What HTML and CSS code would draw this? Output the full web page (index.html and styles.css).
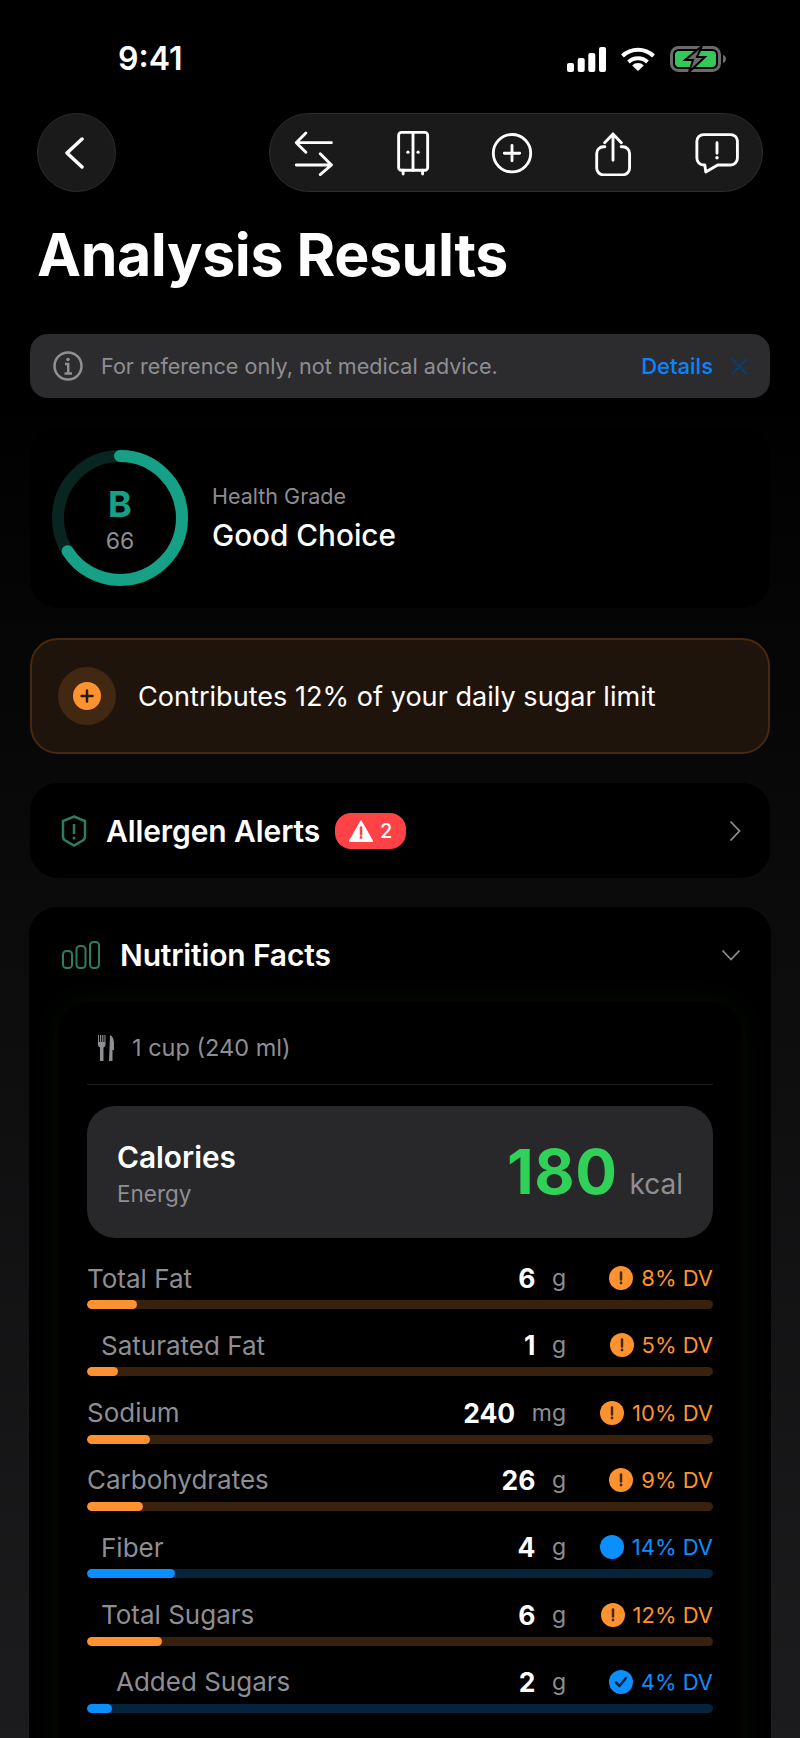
FILE: index.html
```html
<!doctype html>
<html lang="en">
<head>
	<meta charset="utf-8">
	<meta name="viewport" content="width=device-width, initial-scale=1.0">
	<title>Analysis Results</title>
	<link rel="stylesheet" href="styles.css">
</head>
<body>
<div class="screen">

	<div class="status">
		<span class="time">9:41</span>
		<div class="status-icons">
			<svg class="ic-signal" viewBox="0 0 39 25"><rect x="0" y="16" width="7" height="9" rx="2"/><rect x="10.7" y="11" width="7" height="14" rx="2"/><rect x="21.3" y="6" width="7" height="19" rx="2"/><rect x="32" y="0" width="7" height="25" rx="2"/></svg>
			<svg class="ic-wifi" viewBox="0 0 34 24"><path d="M1.500 9a22.500 22.500 0 0 1 31 0" /><path d="M7.500 15a14 14 0 0 1 19 0"/><path class="fill" d="M17 24l-5.800-5.600a8 8 0 0 1 11.600 0z"/></svg>
			<svg class="ic-battery" viewBox="0 0 56 26">
				<rect class="bat-body" x="1.500" y="1.500" width="48" height="23" rx="7"/>
				<rect class="bat-fill" x="5" y="5" width="41" height="16" rx="4"/>
				<path class="bat-nub" d="M53 9c2 .5 3 2 3 4s-1 3.500-3 4z"/>
				<path class="bat-bolt" d="M32 0L15 14h8l-4 12 16-15h-8z"/>
			</svg>
		</div>
	</div>

	<div class="nav">
		<button class="back">
			<svg viewBox="0 0 24 38"><path d="M17 5L2 19l15 14"/></svg>
		</button>
		<div class="tools">
			<svg viewBox="0 0 48 48"><path d="M42.200 13.200H5.500M15.500 3.200L5.500 13.200l10 10M5.500 36.500h36.700M30.500 24.800l11.700 11.700-11.700 10"/></svg>
			<svg viewBox="0 0 48 48"><rect x="9" y="2.500" width="30.300" height="39.500" rx="3"/><path d="M24 2.500V42M13.700 42v4M34 42v4"/><circle class="dot" cx="18.700" cy="23.200" r="1.700"/><circle class="dot" cx="29.300" cy="23.200" r="1.700"/></svg>
			<svg viewBox="0 0 48 48"><circle cx="24" cy="24.200" r="19.500"/><path d="M24 16.200v16M16 24.200h16"/></svg>
			<svg viewBox="0 0 48 48"><path d="M15.500 17.500H14a7 7 0 0 0-7 7v15.300a7 7 0 0 0 7 7h20.300a7 7 0 0 0 7-7V24.500a7 7 0 0 0-7-7h-1.800M24 31.500V4.200M15.300 13.200L24 4.200l8.700 9"/></svg>
			<svg viewBox="0 0 48 48"><path d="M10 4.800h28.300a7 7 0 0 1 7 7v17.700a7 7 0 0 1-7 7H24.700l-12.400 7.300-1-7.300H10a7 7 0 0 1-7-7V11.800a7 7 0 0 1 7-7zM24 13.200v11"/><circle class="dot" cx="24" cy="29" r="1.800"/></svg>
		</div>
	</div>

	<h1 class="title">Analysis Results</h1>

	<div class="notice">
		<svg class="ic-info" viewBox="0 0 30 30"><circle cx="15" cy="15" r="13.500"/><path d="M12 13h3.200v9M11.500 22.500h7.500"/><circle class="dot" cx="15" cy="8.500" r="1.800"/></svg>
		<span class="notice-text">For reference only, not medical advice.</span>
		<span class="notice-link">Details</span>
		<svg class="ic-close" viewBox="0 0 16 16"><path d="M1 1l14 14M15 1L1 15"/></svg>
	</div>

	<div class="card grade">
		<div class="ring">
			<svg viewBox="0 0 136 136">
				<circle class="ring-track" cx="68" cy="68" r="62"/>
				<circle class="ring-value" cx="68" cy="68" r="62" pathLength="100" stroke-dasharray="66 100" transform="rotate(-90 68 68)"/>
			</svg>
			<div class="ring-label">
				<span class="ring-letter">B</span>
				<span class="ring-score">66</span>
			</div>
		</div>
		<div>
			<div class="grade-small">Health Grade</div>
			<div class="grade-big">Good Choice</div>
		</div>
	</div>

	<div class="sugar">
		<div class="sugar-icon">
			<svg viewBox="0 0 28 28"><circle class="sugar-disc" cx="14" cy="14" r="14"/><path d="M14 8.500v11M8.500 14h11"/></svg>
		</div>
		<span>Contributes 12% of your daily sugar limit</span>
	</div>

	<div class="card allergen">
		<svg class="ic-shield" viewBox="0 0 26 32"><path d="M13 1.500l11 4.500v15.500c0 1.500-.5 2.500-1.500 3.500L13 30.500 3.500 25C2.500 24 2 23 2 21.500V6z"/><path d="M13 9v10"/><circle class="dot" cx="13" cy="23" r="1.500"/></svg>
		<span class="card-title">Allergen Alerts</span>
		<span class="badge">
			<svg viewBox="0 0 24 22"><path class="badge-tri" d="M12 1L23.500 21.500H.5z"/><path class="badge-mark" d="M12 7.500v7"/><circle class="badge-dot" cx="12" cy="17.500" r="1.400"/></svg>
			2
		</span>
		<svg class="ic-chevron-right" viewBox="0 0 12 22"><path d="M1.500 1.500L10.500 11l-9 9.500"/></svg>
	</div>

	<div class="card nutrition">
		<div class="nutrition-head">
			<svg class="ic-bars" viewBox="0 0 38 28"><rect x="1" y="10" width="9" height="17" rx="3.500"/><rect x="14.500" y="5" width="9" height="22" rx="3.500"/><rect x="28" y="1" width="9" height="26" rx="3.500"/></svg>
			<span class="card-title">Nutrition Facts</span>
			<svg class="ic-chevron-down" viewBox="0 0 20 12"><path d="M1.500 1.500L10 10.500l8.500-9"/></svg>
		</div>

		<div class="facts">
			<div class="serving">
				<svg class="ic-fork" viewBox="0 0 18 26"><path class="fill" d="M1 0h1v7h1V0h1.200v7h1V0h1.200v7h1V0H8.500v9.500c0 1.500-1 2.500-2 3V26H3V12.500c-1-.5-2-1.500-2-3zM13 0c2.500 1 4 4 4 8v7h-1.500v11H12z"/></svg>
				<span>1 cup (240 ml)</span>
			</div>

			<div class="calories">
				<div class="cal-left">
					<div class="cal-title">Calories</div>
					<div class="cal-sub">Energy</div>
				</div>
				<div class="cal-value"><b>180</b><span>kcal</span></div>
			</div>

			<div class="rows">
				<div class="row warn">
					<div class="row-top">
						<span class="name">Total Fat</span>
						<span class="amount">6</span><span class="unit">g</span>
						<span class="dv"><svg viewBox="0 0 24 24"><circle class="disc" cx="12" cy="12" r="12"/><path class="mark" d="M12 6.500v7"/><circle class="mark-dot" cx="12" cy="17" r="1.400"/></svg>8% DV</span>
					</div>
					<div class="bar"><div class="fill-bar" style="width:8%"></div></div>
				</div>
				<div class="row warn">
					<div class="row-top">
						<span class="name sub1">Saturated Fat</span>
						<span class="amount">1</span><span class="unit">g</span>
						<span class="dv"><svg viewBox="0 0 24 24"><circle class="disc" cx="12" cy="12" r="12"/><path class="mark" d="M12 6.500v7"/><circle class="mark-dot" cx="12" cy="17" r="1.400"/></svg>5% DV</span>
					</div>
					<div class="bar"><div class="fill-bar" style="width:5%"></div></div>
				</div>
				<div class="row warn">
					<div class="row-top">
						<span class="name">Sodium</span>
						<span class="amount">240</span><span class="unit">mg</span>
						<span class="dv"><svg viewBox="0 0 24 24"><circle class="disc" cx="12" cy="12" r="12"/><path class="mark" d="M12 6.500v7"/><circle class="mark-dot" cx="12" cy="17" r="1.400"/></svg>10% DV</span>
					</div>
					<div class="bar"><div class="fill-bar" style="width:10%"></div></div>
				</div>
				<div class="row warn">
					<div class="row-top">
						<span class="name">Carbohydrates</span>
						<span class="amount">26</span><span class="unit">g</span>
						<span class="dv"><svg viewBox="0 0 24 24"><circle class="disc" cx="12" cy="12" r="12"/><path class="mark" d="M12 6.500v7"/><circle class="mark-dot" cx="12" cy="17" r="1.400"/></svg>9% DV</span>
					</div>
					<div class="bar"><div class="fill-bar" style="width:9%"></div></div>
				</div>
				<div class="row good">
					<div class="row-top">
						<span class="name sub1">Fiber</span>
						<span class="amount">4</span><span class="unit">g</span>
						<span class="dv"><svg viewBox="0 0 24 24"><circle class="disc" cx="12" cy="12" r="12"/></svg>14% DV</span>
					</div>
					<div class="bar"><div class="fill-bar" style="width:14%"></div></div>
				</div>
				<div class="row warn">
					<div class="row-top">
						<span class="name sub1">Total Sugars</span>
						<span class="amount">6</span><span class="unit">g</span>
						<span class="dv"><svg viewBox="0 0 24 24"><circle class="disc" cx="12" cy="12" r="12"/><path class="mark" d="M12 6.500v7"/><circle class="mark-dot" cx="12" cy="17" r="1.400"/></svg>12% DV</span>
					</div>
					<div class="bar"><div class="fill-bar" style="width:12%"></div></div>
				</div>
				<div class="row good">
					<div class="row-top">
						<span class="name sub2">Added Sugars</span>
						<span class="amount">2</span><span class="unit">g</span>
						<span class="dv"><svg viewBox="0 0 24 24"><circle class="disc" cx="12" cy="12" r="12"/><path class="mark" d="M7 12.500l3.500 3.500 6.500-8"/></svg>4% DV</span>
					</div>
					<div class="bar"><div class="fill-bar" style="width:4%"></div></div>
				</div>
			</div>
		</div>
	</div>

</div>
</body>
</html>
```

FILE: styles.css
```css
* {
	box-sizing: border-box;
}
html, body {
	margin: 0;
	padding: 0;
	background: #000;
}
.screen {
	width: 800px;
	height: 1738px;
	overflow: hidden;
	font-family: Inter, "Liberation Sans", sans-serif;
	color: #fff;
	background: linear-gradient(180deg, #000 380px, #1c1c1e 1738px);
}
svg {
	display: block;
	flex: none;
}

/* status bar */
.status {
	height: 113px;
	padding: 42px 74px 0 118px;
	display: flex;
	justify-content: space-between;
	align-items: flex-start;
}
.time {
	font-size: 32px;
	font-weight: 600;
	line-height: 34px;
}
.status-icons {
	display: flex;
	align-items: center;
	gap: 15px;
	padding-top: 4px;
}
.ic-signal {
	width: 39px;
	height: 25px;
	fill: #fff;
}
.ic-wifi {
	width: 34px;
	height: 24px;
	fill: none;
	stroke: #fff;
	stroke-width: 4;
}
.ic-wifi .fill {
	fill: #fff;
	stroke: none;
}
.ic-battery {
	width: 56px;
	height: 26px;
}
.bat-body {
	fill: none;
	stroke: #6b6b6b;
	stroke-width: 3;
}
.bat-fill {
	fill: #34c759;
}
.bat-nub {
	fill: #6b6b6b;
}
.bat-bolt {
	fill: #6b6b6b;
	stroke: #000;
	stroke-width: 2;
}

/* top buttons */
.nav {
	display: flex;
	justify-content: space-between;
	padding: 0 37px;
}
.back {
	width: 79px;
	height: 79px;
	padding: 0;
	border-radius: 50%;
	border: 1.500px solid #2c2c2e;
	background: #1a1a1a;
	display: flex;
	align-items: center;
	justify-content: center;
}
.back svg {
	width: 24px;
	height: 38px;
	fill: none;
	stroke: #fff;
	stroke-width: 3.500;
	stroke-linecap: round;
	stroke-linejoin: round;
}
.tools {
	width: 494px;
	height: 79px;
	border-radius: 40px;
	border: 1.500px solid #2c2c2e;
	background: #1a1a1a;
	display: flex;
	align-items: center;
	padding-left: 20.500px;
}
.tools svg {
	width: 46px;
	height: 46px;
	margin-left: 53px;
	fill: none;
	stroke: #fff;
	stroke-width: 3;
	stroke-linecap: round;
	stroke-linejoin: round;
}
.tools svg:first-child {
	margin-left: 0;
}
.tools svg:nth-child(4) {
	margin-left: 55px;
}
.tools svg:nth-child(5) {
	margin-left: 58px;
}
.tools .dot {
	fill: #fff;
	stroke: none;
}

.title {
	margin: 27px 0 0 37px;
	font-size: 59px;
	line-height: 72px;
	font-weight: 700;
	letter-spacing: -0.4px;
}

/* grey notice */
.notice {
	margin: 43px 30px 0;
	height: 64px;
	border-radius: 18px;
	background: #2c2c2e;
	display: flex;
	align-items: center;
	padding: 0 22px 0 23px;
	font-size: 22px;
}
.ic-info {
	width: 30px;
	height: 30px;
	fill: none;
	stroke: #8e8e93;
	stroke-width: 2.500;
}
.ic-info .dot {
	fill: #8e8e93;
	stroke: none;
}
.notice-text {
	flex: 1;
	margin-left: 18px;
	font-size: 21.600px;
	color: #8e8e93;
}
.notice-link {
	color: #0a84ff;
	font-weight: 500;
}
.ic-close {
	width: 17px;
	height: 17px;
	margin-left: 18px;
	fill: none;
	stroke: #123c66;
	stroke-width: 2;
}

/* cards */
.card {
	background: #000;
	border-radius: 28px;
	margin-left: 30px;
	margin-right: 30px;
}
.card-title {
	font-size: 30px;
	font-weight: 600;
}
.grade {
	margin-top: 29px;
	height: 181px;
	padding: 0 22px;
	display: flex;
	align-items: center;
	gap: 24px;
}
.ring {
	position: relative;
	width: 136px;
	height: 136px;
}
.ring svg {
	width: 136px;
	height: 136px;
	fill: none;
	stroke-width: 12;
}
.ring-track {
	stroke: #08251f;
}
.ring-value {
	stroke: #16a085;
	stroke-linecap: round;
}
.ring-label {
	position: absolute;
	inset: 0;
	padding-top: 2px;
	display: flex;
	flex-direction: column;
	align-items: center;
	justify-content: center;
}
.ring-letter {
	font-size: 36px;
	font-weight: 700;
	line-height: 42px;
	color: #16a085;
}
.ring-score {
	margin-top: 2px;
	font-size: 23px;
	line-height: 28px;
	color: #8e8e93;
}
.grade-small {
	font-size: 21.500px;
	line-height: 28px;
	color: #8e8e93;
}
.grade-big {
	margin-top: 7px;
	font-size: 29.700px;
	line-height: 36px;
	font-weight: 500;
}

/* sugar warning */
.sugar {
	margin: 30px 30px 0;
	height: 116px;
	padding: 0 26px;
	border-radius: 28px;
	border: 2px solid #47290f;
	background: #1f140b;
	display: flex;
	align-items: center;
	gap: 22px;
	font-size: 27.100px;
	font-weight: 400;
}
.sugar-icon {
	width: 58px;
	height: 58px;
	border-radius: 50%;
	background: #402813;
	display: flex;
	align-items: center;
	justify-content: center;
}
.sugar-icon svg {
	width: 28px;
	height: 28px;
	fill: none;
	stroke: #2b1a08;
	stroke-width: 2.500;
	stroke-linecap: round;
}
.sugar-disc {
	fill: #ff9230;
	stroke: none;
}

.allergen {
	margin-top: 29px;
	height: 95px;
	padding: 0 29px 0 31px;
	display: flex;
	align-items: center;
}
.ic-shield {
	width: 26px;
	height: 32px;
	fill: none;
	stroke: #2f7d5f;
	stroke-width: 2.500;
}
.ic-shield .dot {
	fill: #2f7d5f;
	stroke: none;
}
.allergen .card-title {
	margin-left: 19px;
	letter-spacing: -0.1px;
}
.badge {
	margin-left: 15px;
	margin-right: auto;
	width: 71px;
	height: 36px;
	border-radius: 16px;
	background: #ff4245;
	display: flex;
	align-items: center;
	justify-content: center;
	gap: 7px;
	font-size: 20px;
	font-weight: 500;
}
.badge svg {
	width: 24px;
	height: 22px;
}
.badge-tri {
	fill: #fff;
	stroke: #fff;
	stroke-width: 1.500;
	stroke-linejoin: round;
}
.badge-mark {
	stroke: #ff4245;
	stroke-width: 2.500;
	stroke-linecap: round;
}
.badge-dot {
	fill: #ff4245;
}
.ic-chevron-right {
	width: 12px;
	height: 22px;
	fill: none;
	stroke: #8e8e93;
	stroke-width: 1.800;
}

/* nutrition */
.nutrition {
	margin: 29px 29px 0;
	padding: 0 29px;
	height: 900px;
}
.nutrition-head {
	height: 95px;
	padding: 0 1px 0 4px;
	display: flex;
	align-items: center;
}
.ic-bars {
	width: 38px;
	height: 28px;
	fill: none;
	stroke: #2f7d5f;
	stroke-width: 2;
}
.nutrition-head .card-title {
	flex: 1;
	margin-left: 20px;
	letter-spacing: -0.15px;
}
.ic-chevron-down {
	width: 20px;
	height: 12px;
	fill: none;
	stroke: #8e8e93;
	stroke-width: 1.800;
}
.facts {
	height: 800px;
	padding: 0 29px;
	background: #000;
	border-radius: 28px;
	box-shadow: 0 0 28px rgba(48, 209, 88, 0.07);
}
.serving {
	height: 83px;
	padding: 9px 10px 0;
	border-bottom: 1.500px solid #1f1f21;
	display: flex;
	align-items: center;
	gap: 17px;
	font-size: 23.500px;
	color: #8e8e93;
}
.ic-fork {
	width: 18px;
	height: 26px;
	fill: #8e8e93;
}
.calories {
	margin-top: 21px;
	height: 132px;
	padding: 0 30px;
	border-radius: 28px;
	background: #28282a;
	display: flex;
	align-items: center;
	justify-content: space-between;
}
.cal-left {
	padding-top: 2px;
}
.cal-title {
	font-size: 29.800px;
	line-height: 36px;
	font-weight: 600;
}
.cal-sub {
	margin-top: 5px;
	font-size: 22.500px;
	line-height: 28px;
	color: #8e8e93;
}
.cal-value {
	display: flex;
	align-items: baseline;
	gap: 12px;
}
.cal-value b {
	font-size: 62px;
	line-height: 72px;
	font-weight: 700;
	letter-spacing: 0.5px;
	color: #30d158;
}
.cal-value span {
	font-size: 28px;
	color: #8e8e93;
}
.rows {
	margin-top: 23px;
}
.row {
	margin-bottom: 19.330px;
}
.row-top {
	height: 34px;
	margin-bottom: 5px;
	display: flex;
	align-items: center;
}
.name {
	flex: 1;
	font-size: 26px;
	color: #8e8e93;
}
.sub1 {
	padding-left: 14px;
}
.sub2 {
	padding-left: 29px;
}
.amount {
	font-size: 26.500px;
	font-weight: 700;
}
.unit {
	margin-left: 16.500px;
	font-size: 23px;
	color: #8e8e93;
}
.dv {
	width: 147px;
	display: flex;
	align-items: center;
	justify-content: flex-end;
	gap: 8px;
	font-size: 22px;
}
.dv svg {
	width: 24px;
	height: 24px;
}
.mark {
	fill: none;
	stroke: #402813;
	stroke-width: 2.500;
	stroke-linecap: round;
	stroke-linejoin: round;
}
.mark-dot {
	fill: #402813;
}
.bar {
	height: 9px;
	border-radius: 5px;
	overflow: hidden;
}
.fill-bar {
	height: 9px;
	border-radius: 5px;
}
.warn .dv {
	color: #ff9230;
}
.warn .disc, .warn .fill-bar {
	fill: #ff9230;
	background: #ff9230;
}
.warn .bar {
	background: #3a210e;
}
.good .dv {
	color: #0a8fff;
}
.good .disc, .good .fill-bar {
	fill: #0a8fff;
	background: #0a8fff;
}
.good .bar {
	background: #04233d;
}
.good .mark {
	stroke: #04233d;
}
```
